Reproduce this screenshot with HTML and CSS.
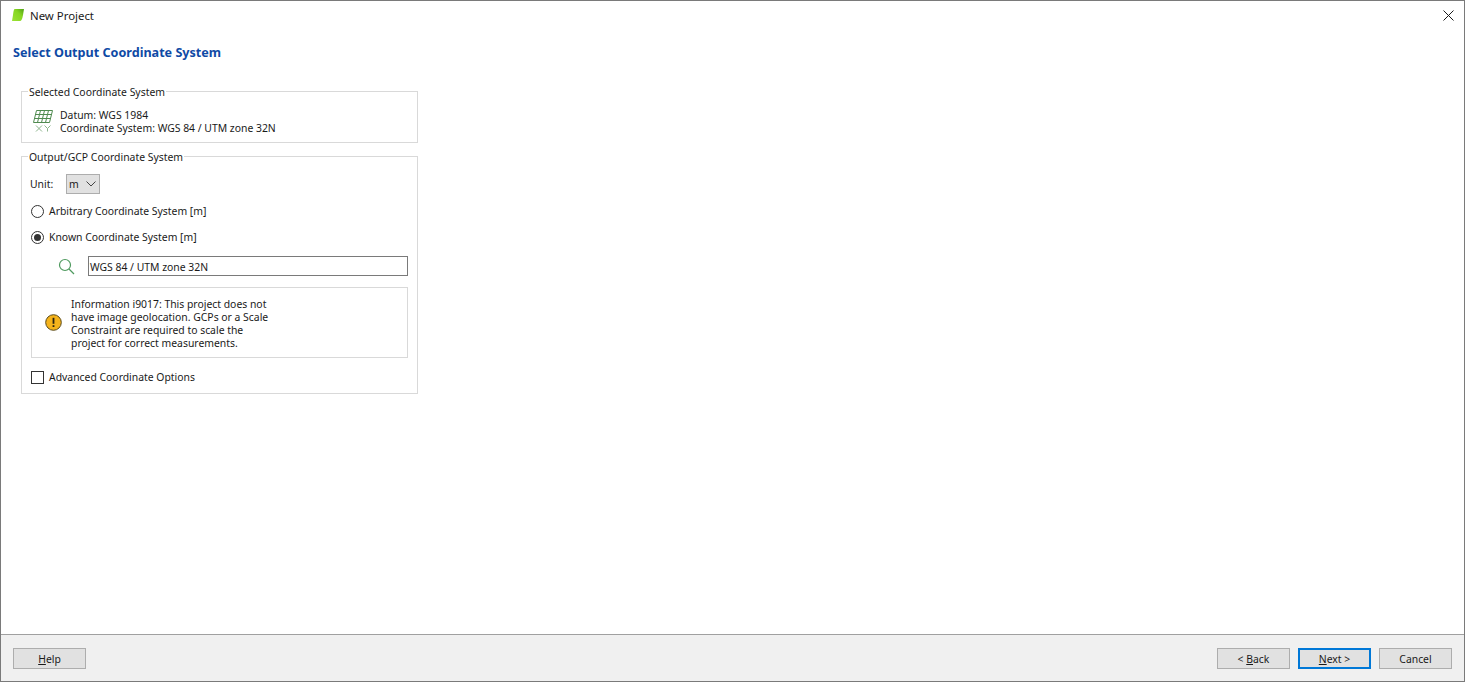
FILE: index.html
```html
<!DOCTYPE html>
<html lang="en">
<head>
    <meta charset="UTF-8">
    <meta name="viewport" content="width=device-width, initial-scale=1.0">
    <title>New Project</title>
    <link rel="stylesheet" href="styles.css">
</head>
<body>
    <div class="window">
        <header class="title-bar">
            <svg class="app-icon" width="14" height="14" viewBox="0 0 14 14">
                <defs>
                    <linearGradient id="leaf" x1="0" y1="1" x2="1" y2="0">
                        <stop offset="0" stop-color="#9be235"/>
                        <stop offset="0.6" stop-color="#86d621"/>
                        <stop offset="1" stop-color="#4f9f16"/>
                    </linearGradient>
                </defs>
                <path d="M3.500 1H13L12 7Q11 13 9 13H1L2 7Q2.500 2 3.500 1Z" fill="url(#leaf)"/>
            </svg>
            <span class="title-text">New Project</span>
            <svg class="close-icon" width="11" height="11" viewBox="0 0 11 11">
                <path d="M0.500 0.500L10.500 10.500M10.500 0.500L0.500 10.500" stroke="#1a1a1a" stroke-width="1" fill="none"/>
            </svg>
        </header>

        <main class="content">
            <h1 class="page-title">Select Output Coordinate System</h1>

            <fieldset class="group group-selected">
                <legend>Selected Coordinate System</legend>
                <div class="selected-row">
                    <svg class="grid-icon" width="20" height="24" viewBox="0 0 20 24">
                        <g stroke="#4f8a4f" stroke-width="1" fill="none">
                            <path d="M3.500 1.500H19.500L16.500 13.500H0.500Z"/>
                            <path d="M2.700 5.500H18.500M1.700 9.500H17.500"/>
                            <path d="M7.500 1.500L4.500 13.500M11.500 1.500L8.500 13.500M15.500 1.500L12.500 13.500"/>
                        </g>
                        <g stroke="#8db58d" stroke-width="1" fill="none">
                            <path d="M3 16.500L9 22.500M9 16.500L3 22.500"/>
                            <path d="M11.500 16.500L14.500 19.500L17.500 16.500M14.500 19.500V22.500"/>
                        </g>
                    </svg>
                    <div class="selected-text">
                        <div>Datum: WGS 1984</div>
                        <div>Coordinate System: WGS 84 / UTM zone 32N</div>
                    </div>
                </div>
            </fieldset>

            <fieldset class="group group-output">
                <legend>Output/GCP Coordinate System</legend>

                <div class="group-body">
                    <div class="unit-row">
                        <span class="unit-label">Unit:</span>
                        <div class="combo">
                            <span>m</span>
                            <svg width="10" height="6" viewBox="0 0 10 6">
                                <path d="M0.500 0.500L5 5L9.500 0.500" stroke="#444" stroke-width="1" fill="none"/>
                            </svg>
                        </div>
                    </div>

                    <div class="radio-row">
                        <span class="radio"></span>
                        <span>Arbitrary Coordinate System [m]</span>
                    </div>
                    <div class="radio-row">
                        <span class="radio checked"></span>
                        <span>Known Coordinate System [m]</span>
                    </div>

                    <div class="search-row">
                        <svg width="17" height="17" viewBox="0 0 17 17">
                            <circle cx="7" cy="7" r="5.500" stroke="#4f9a5f" stroke-width="1.200" fill="none"/>
                            <path d="M11 11L16 16" stroke="#4f9a5f" stroke-width="1.300" fill="none"/>
                        </svg>
                        <div class="text-input">WGS 84 / UTM zone 32N</div>
                    </div>

                    <div class="info-box">
                        <svg class="warn-icon" width="17" height="17" viewBox="0 0 17 17">
                            <circle cx="8.500" cy="8.500" r="7.800" fill="#f5b31b" stroke="#5a4a1a" stroke-width="1"/>
                            <rect x="7.600" y="3.800" width="1.800" height="6" fill="#2b2410"/>
                            <rect x="7.600" y="11.200" width="1.800" height="1.800" fill="#2b2410"/>
                        </svg>
                        <p class="info-text">Information i9017: This project does not<br>have image geolocation. GCPs or a Scale<br>Constraint are required to scale the<br>project for correct measurements.</p>
                    </div>

                    <div class="check-row">
                        <span class="checkbox"></span>
                        <span>Advanced Coordinate Options</span>
                    </div>
                </div>
            </fieldset>
        </main>

        <footer class="button-bar">
            <button class="btn"><u>H</u>elp</button>
            <div class="nav-buttons">
                <button class="btn">&lt; <u>B</u>ack</button>
                <button class="btn primary"><u>N</u>ext &gt;</button>
                <button class="btn">Cancel</button>
            </div>
        </footer>
    </div>
</body>
</html>
```

FILE: styles.css
```css
* {
    margin: 0;
    padding: 0;
    box-sizing: border-box;
}

body {
    font-family: 'Noto Sans', 'Open Sans', sans-serif;
    font-size: 10.4px;
    color: #1a1a1a;
    background: #fff;
    overflow: hidden;
}

.window {
    width: 1465px;
    height: 682px;
    display: flex;
    flex-direction: column;
    border: 1px solid #7a7a7a;
}

.title-bar {
    display: flex;
    align-items: center;
    height: 28px;
    padding: 0 10px;
    flex-shrink: 0;
}

.app-icon {
    margin-right: 5px;
}

.title-text {
    font-size: 11.4px;
    flex: 1;
}

.content {
    flex: 1;
    padding: 15px 0 0 12px;
}

.page-title {
    font-size: 12.6px;
    font-weight: bold;
    line-height: 18px;
    color: #0f4aa5;
    margin-bottom: 21px;
}

.group {
    width: 397px;
    margin-left: 8px;
    border: 1px solid #d9d9d9;
}

.group legend {
    margin-left: 6px;
    padding: 2px 1px 0;
    line-height: 14px;
}

.group-selected {
    height: 60px;
    margin-bottom: 5px;
}

.selected-row {
    display: flex;
    align-items: center;
    padding: 8px 0 0 11px;
}

.grid-icon {
    margin-right: 7px;
}

.selected-text {
    line-height: 13px;
    padding-top: 2px;
}

.group-output {
    height: 246px;
}

.group-body {
    padding: 10px 9px 0 8px;
}

.unit-row {
    display: flex;
    align-items: center;
    height: 20px;
    margin-bottom: 9px;
}

.unit-label {
    width: 36px;
}

.combo {
    display: flex;
    align-items: center;
    justify-content: space-between;
    width: 34px;
    height: 20px;
    padding: 0 3px 0 2px;
    background: #e1e1e1;
    border: 1px solid #adadad;
}

.radio-row {
    display: flex;
    align-items: center;
    height: 16px;
    margin-bottom: 10px;
    gap: 5px;
}

.radio {
    display: flex;
    align-items: center;
    justify-content: center;
    width: 13px;
    height: 13px;
    margin-left: 1px;
    border: 1px solid #333;
    border-radius: 50%;
    background: #fff;
}

.radio.checked::after {
    content: '';
    width: 7px;
    height: 7px;
    border-radius: 50%;
    background: #333;
}

.search-row {
    display: flex;
    align-items: center;
    margin: 11px 0 11px 28px;
    gap: 13px;
}

.text-input {
    flex: 1;
    height: 20px;
    line-height: 20px;
    padding-left: 1px;
    border: 1px solid #7a7a7a;
}

.info-box {
    display: flex;
    align-items: center;
    height: 71px;
    margin-left: 1px;
    margin-bottom: 11px;
    padding-left: 13px;
    border: 1px solid #d9d9d9;
}

.warn-icon {
    margin-right: 9px;
}

.info-text {
    line-height: 13px;
    padding-top: 2px;
}

.check-row {
    display: flex;
    align-items: center;
    height: 16px;
    gap: 5px;
}

.checkbox {
    width: 13px;
    height: 13px;
    margin-left: 1px;
    border: 1px solid #333;
    background: #fff;
}

.button-bar {
    display: flex;
    justify-content: space-between;
    align-items: center;
    height: 47px;
    padding: 0 12px;
    flex-shrink: 0;
    background: #f0f0f0;
    border-top: 1px solid #a0a0a0;
}

.nav-buttons {
    display: flex;
    gap: 8px;
}

.btn {
    width: 73px;
    height: 21px;
    padding-top: 2px;
    font-family: inherit;
    font-size: 10.4px;
    color: #1a1a1a;
    background: #e1e1e1;
    border: 1px solid #adadad;
}

.btn.primary {
    border: 2px solid #0078d7;
}
```
